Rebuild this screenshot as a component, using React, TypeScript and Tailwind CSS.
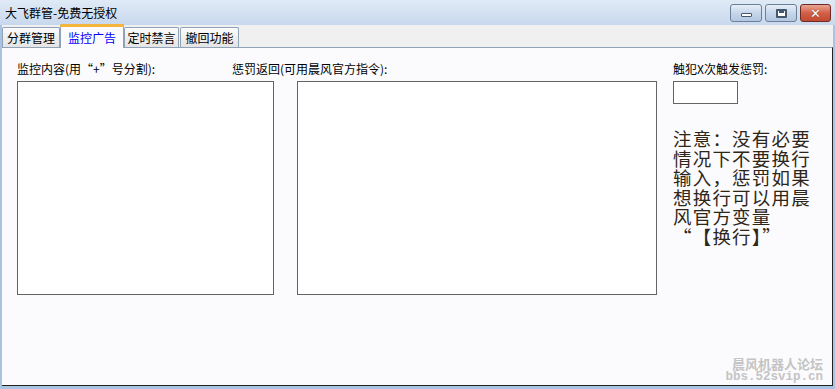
import React from "react";

const cjkCls = "font-['Noto_Sans_CJK_SC','Noto_Sans',sans-serif]";

function Tab({ label, selected, w }: { label: string; selected?: boolean; w: string }) {
  if (selected) {
    return (
      <div
        className={`${w} h-[24px] relative z-10 -mb-[1px] flex items-start justify-center pt-[4px] border border-b-0 border-[#8fa2b6] rounded-t-[2px] bg-[#fbfbfd] text-[12px] leading-[15px] text-[#0000ff]`}
      >
        <div className="absolute left-[-1px] right-[-1px] top-[-1px] h-[3px] bg-[#f3b53c] rounded-t-[2px]" />
        <span className="relative top-[1px]">{label}</span>
      </div>
    );
  }
  return (
    <div
      className={`${w} h-[20px] flex items-center justify-center border border-b-0 border-[#8fa2b6] rounded-t-[2px] bg-gradient-to-b from-[#fbfbfb] to-[#e4e4e4] text-[12px] leading-[15px] text-black`}
    >
      {label}
    </div>
  );
}

export default function App() {
  return (
    <div className={`w-[835px] h-[389px] overflow-hidden relative flex flex-col bg-[#f0f0f0] ${cjkCls}`}>
      {/* Title bar */}
      <div className="h-[25px] shrink-0 flex items-start justify-between bg-gradient-to-b from-[#e0eaf6] to-[#c8d8ec] pl-[5px] pr-[4px]">
        <div className="text-[12px] leading-[15px] pt-[5px] text-black">大飞群管-免费无授权</div>
        <div className="flex gap-[3px] pt-[4px]">
          <div className="w-[32px] h-[18px] rounded-[3px] border border-[#6b7f9a] bg-gradient-to-b from-[#e6eef8] via-[#c6d6ea] to-[#b3c7e0] flex items-center justify-center">
            <div className="w-[11px] h-[4px] bg-white border border-[#44566e] rounded-[1px] mt-[3px]" />
          </div>
          <div className="w-[32px] h-[18px] rounded-[3px] border border-[#6b7f9a] bg-gradient-to-b from-[#e6eef8] via-[#c6d6ea] to-[#b3c7e0] flex items-center justify-center">
            <div className="w-[11px] h-[9px] border-[2px] border-[#44566e] bg-white rounded-[1px] flex items-center justify-center">
              <div className="w-[5px] h-[2px] bg-[#44566e] mt-[-2px]" />
            </div>
          </div>
          <div className="w-[31px] h-[18px] rounded-[3px] border border-[#6e2a22] bg-gradient-to-b from-[#e8a595] via-[#d35f48] to-[#c14a30] flex items-center justify-center">
            <span className="text-white font-bold text-[13px] leading-[13px] font-['DejaVu_Sans',sans-serif] [text-shadow:0_0_1px_#5a1a10]">
              ✕
            </span>
          </div>
        </div>
      </div>

      {/* Body with frame edges */}
      <div className="flex-1 flex flex-col border-l-[2px] border-r-[2px] border-b-[3px] border-[#a9c4e2]">
        {/* Tab row */}
        <div className="h-[22px] shrink-0 flex items-end">
          <Tab label="分群管理" w="w-[58px]" />
          <Tab label="监控广告" selected w="w-[64px]" />
          <Tab label="定时禁言" w="w-[55px]" />
          <div className="ml-[1px]">
            <Tab label="撤回功能" w="w-[59px]" />
          </div>
        </div>

        {/* Panel */}
        <div className="flex-1 relative bg-[#fbfbfd] border-t border-t-[#8fa2b6] border-r border-b border-r-[#222] border-b-[#222] border-r-dotted border-b-dotted pl-[15px] pt-[14px]">
          {/* Labels row */}
          <div className="flex text-[12px] leading-[14px] text-black">
            <div className="w-[215px]">监控内容(用“+”号分割):</div>
            <div className="w-[441px]">惩罚返回(可用晨风官方指令):</div>
            <div>触犯X次触发惩罚:</div>
          </div>

          {/* Boxes row */}
          <div className="flex mt-[5px]">
            <div className="w-[257px] h-[214px] border border-[#646464] bg-white" />
            <div className="w-[360px] h-[214px] ml-[23px] border border-[#646464] bg-white" />
            <div className="ml-[16px] flex flex-col">
              <div className="w-[65px] h-[23px] border border-[#646464] bg-white" />
              <div className="mt-[25px] text-[18.5px] leading-[19.6px] tracking-[1.2px] text-[#2e2618] whitespace-nowrap">
                <div>注意：没有必要</div>
                <div>情况下不要换行</div>
                <div>输入，惩罚如果</div>
                <div>想换行可以用晨</div>
                <div>风官方变量</div>
                <div>
                  <span className="inline-block w-[19.7px] text-right">“</span>【换行】”
                </div>
              </div>
            </div>
          </div>

          {/* Watermark */}
          <div className="absolute right-[9px] bottom-[1px] flex flex-col items-end text-[#c4c4c4] font-bold">
            <div className="text-[13px] leading-[15px]">晨风机器人论坛</div>
            <div className="text-[12.5px] leading-[13px] font-['Liberation_Mono',monospace]">
              bbs.52svip.cn
            </div>
          </div>
        </div>
      </div>
    </div>
  );
}
